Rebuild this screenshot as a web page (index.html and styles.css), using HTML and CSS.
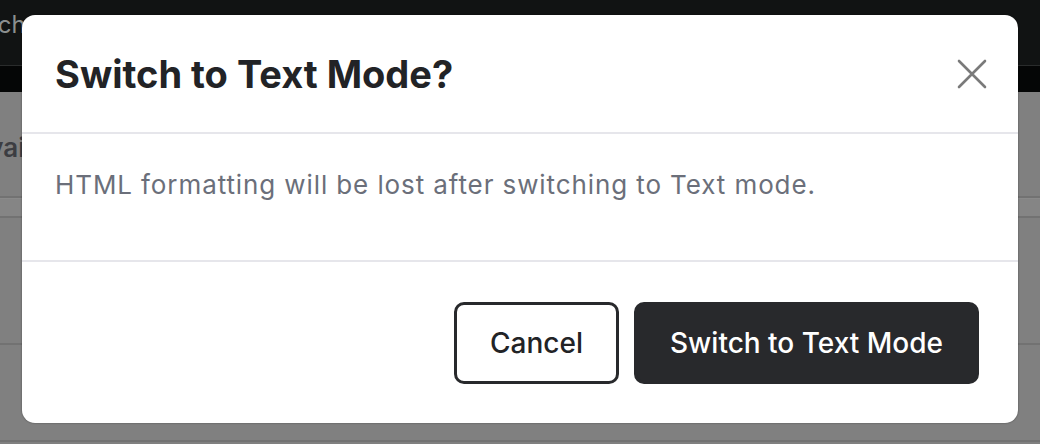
FILE: index.html
```html
<!DOCTYPE html>
<html lang="en">
<head>
    <meta charset="UTF-8">
    <meta name="viewport" content="width=device-width, initial-scale=1.0">
    <title>Switch to Text Mode?</title>
    <link rel="stylesheet" href="styles.css">
</head>
<body>
    <div class="page">
        <div class="topbar"><span class="topbar-text">Search</span></div>
        <div class="subbar"></div>
        <div class="content">
            <div class="row row-title"><span>Available</span></div>
            <div class="row row-thin"></div>
            <div class="row row-tall"></div>
            <div class="row row-last"></div>
        </div>
    </div>

    <div class="modal" role="dialog" aria-labelledby="modal-title">
        <div class="modal-header">
            <h2 id="modal-title">Switch to Text Mode?</h2>
            <button class="close-btn" aria-label="Close">
                <svg width="30" height="30" viewBox="0 0 30 30" fill="none">
                    <path d="M2 2 L28 28 M28 2 L2 28" stroke="#7a7a7a" stroke-width="2.6" stroke-linecap="round"/>
                </svg>
            </button>
        </div>
        <div class="modal-body">
            <p>HTML formatting will be lost after switching to Text mode.</p>
        </div>
        <div class="modal-footer">
            <button class="btn btn-outline">Cancel</button>
            <button class="btn btn-dark">Switch to Text Mode</button>
        </div>
    </div>
</body>
</html>
```

FILE: styles.css
```css
body {
    margin: 0;
    width: 1040px;
    height: 444px;
    overflow: hidden;
    background: #808080;
    font-family: Inter, 'Noto Sans', sans-serif;
}

.page {
    display: flex;
    flex-direction: column;
    height: 444px;
}

.topbar {
    height: 65px;
    background: #111313;
    border-bottom: 1px solid #2a2c2c;
    display: flex;
    align-items: center;
    overflow: hidden;
}

.topbar-text {
    margin-left: -54px;
    margin-top: -16px;
    color: #8c8f8f;
    font-size: 24px;
}

.subbar {
    height: 26px;
    background: #050606;
}

.content {
    display: flex;
    flex-direction: column;
}

.row {
    border-bottom: 2px solid #727272;
}

.row-title {
    height: 104px;
    display: flex;
    align-items: center;
    overflow: hidden;
}

.row-title span {
    margin-left: -29px;
    margin-top: 6px;
    color: #3c3d42;
    font-size: 26px;
    font-weight: 600;
}

.row-thin {
    height: 17px;
    background: #858585;
    border-top: 1px solid #8a8a8a;
}

.row-tall {
    height: 125px;
}

.row-last {
    height: 95px;
}

.modal {
    position: absolute;
    left: 22px;
    top: 15px;
    width: 996px;
    height: 408px;
    background: #fff;
    border-radius: 13px;
    box-shadow: 0 0 2px rgba(0, 0, 0, 0.45);
    display: flex;
    flex-direction: column;
    overflow: hidden;
}

.modal-header {
    height: 117px;
    display: flex;
    align-items: center;
    justify-content: space-between;
    padding: 0 31px 0 33px;
    border-bottom: 2px solid #e6e6eb;
}

.modal-header h2 {
    margin: 0;
    font-size: 38px;
    font-weight: 700;
    color: #222326;
}

.close-btn {
    background: none;
    border: none;
    padding: 0;
    width: 30px;
    height: 30px;
    cursor: pointer;
    display: flex;
}

.modal-body {
    height: 126px;
    padding: 0 33px;
    border-bottom: 2px solid #e6e6eb;
}

.modal-body p {
    margin: 0;
    padding-top: 35px;
    font-size: 26px;
    line-height: 32px;
    letter-spacing: 0.9px;
    color: #6b6f7a;
}

.modal-footer {
    flex: 1;
    display: flex;
    justify-content: flex-end;
    align-items: center;
    gap: 15px;
    padding: 0 39px 0 33px;
}

.btn {
    height: 82px;
    padding: 0 33px;
    border-radius: 10px;
    font-family: Inter, 'Noto Sans', sans-serif;
    font-size: 28px;
    font-weight: 500;
    cursor: pointer;
}

.btn-outline {
    background: #fff;
    color: #222326;
    border: 3px solid #28292c;
}

.btn-dark {
    background: #28292c;
    color: #fff;
    border: 3px solid #28292c;
}
```
